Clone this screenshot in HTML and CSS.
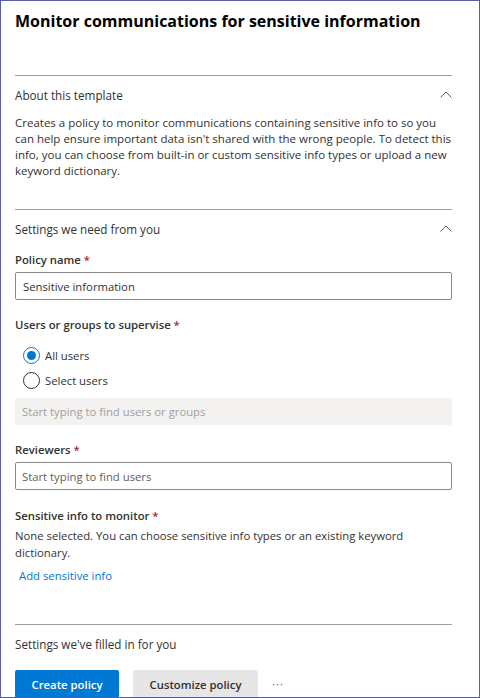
FILE: index.html
```html
<!DOCTYPE html>
<html lang="en">
<head>
<meta charset="utf-8">
<title>Monitor communications for sensitive information</title>
<link rel="stylesheet" href="styles.css">
</head>
<body>
<div class="frame">
  <div class="panel">
    <h1 class="title">Monitor communications for sensitive information</h1>

    <section class="section">
      <div class="section-head">
        <span>About this template</span>
        <svg class="chev" width="12" height="7" viewBox="0 0 12 7"><path d="M0.5 6.5 L6 1 L11.5 6.5" fill="none" stroke="#605e5c" stroke-width="1"/></svg>
      </div>
      <p class="about">Creates a policy to monitor communications containing sensitive info to so you can help ensure important data isn't shared with the wrong people. To detect this info, you can choose from built-in or custom sensitive info types or upload a new keyword dictionary.</p>
    </section>

    <section class="section">
      <div class="section-head">
        <span>Settings we need from you</span>
        <svg class="chev" width="12" height="7" viewBox="0 0 12 7"><path d="M0.5 6.5 L6 1 L11.5 6.5" fill="none" stroke="#605e5c" stroke-width="1"/></svg>
      </div>

      <div class="field">
        <label class="label">Policy name <span class="req">*</span></label>
        <div class="input">Sensitive information</div>
      </div>

      <div class="field">
        <label class="label">Users or groups to supervise <span class="req">*</span></label>
        <div class="radios">
          <div class="radio checked"><span class="dot"></span>All users</div>
          <div class="radio"><span class="dot"></span>Select users</div>
        </div>
        <div class="input disabled">Start typing to find users or groups</div>
      </div>

      <div class="field">
        <label class="label">Reviewers <span class="req">*</span></label>
        <div class="input placeholder">Start typing to find users</div>
      </div>

      <div class="field">
        <label class="label">Sensitive info to monitor <span class="req">*</span></label>
        <p class="note">None selected. You can choose sensitive info types or an existing keyword dictionary.</p>
        <a class="link" href="#">Add sensitive info</a>
      </div>
    </section>

    <section class="section last">
      <div class="section-head">
        <span>Settings we've filled in for you</span>
      </div>
      <div class="actions">
        <button class="btn primary">Create policy</button>
        <button class="btn secondary">Customize policy</button>
        <span class="more">···</span>
      </div>
    </section>
  </div>
</div>
</body>
</html>
```

FILE: styles.css
```css
* { box-sizing: border-box; }
html, body { margin: 0; padding: 0; background: #fff; }
body {
  font-family: "Open Sans", "Noto Sans", sans-serif;
  color: #323130;
  font-size: 11.3px;
}
.frame {
  width: 480px;
  height: 698px;
  border: 1px solid #5b5ea6;
  overflow: hidden;
  background: #fff;
}
.panel {
  width: 451px;
  padding-left: 14px;
}
.title {
  margin: 0;
  padding-top: 6px;
  height: 74px;
  font-size: 16px;
  line-height: 28px;
  font-weight: 700;
  color: #000;
  white-space: nowrap;
}
.section {
  border-top: 1px solid #a19f9d;
}
.section-head {
  height: 39px;
  padding-bottom: 2px;
  display: flex;
  align-items: center;
  justify-content: space-between;
  font-size: 11.7px;
}
.chev { display: block; }
.about {
  margin: 0 0 30px;
  font-size: 11.5px;
  line-height: 16px;
}
.field { margin-top: 1px; }
.label {
  display: block;
  font-weight: 600;
  line-height: 20px;
  color: #323130;
  padding-bottom: 2px;
}
.req { color: #a4262c; }
.input {
  height: 28px;
  border: 1px solid #8a8886;
  border-radius: 2px;
  padding: 0 7px;
  display: flex;
  align-items: center;
  color: #323130;
  margin-bottom: 15px;
}
.input.placeholder { color: #605e5c; padding-left: 6px; margin-bottom: 16px; }
.input.disabled {
  border-color: #f3f2f1;
  background: #f3f2f1;
  color: #a19f9d;
  height: 27px;
  padding-left: 6px;
}
.radios {
  padding: 6px 0 5px 8px;
}
.radio {
  display: flex;
  align-items: center;
  height: 25px;
  gap: 5px;
}
.dot {
  width: 17px;
  height: 17px;
  border: 1px solid #323130;
  border-radius: 50%;
  display: flex;
  align-items: center;
  justify-content: center;
}
.radio.checked .dot { border-color: #0078d4; }
.radio.checked .dot::after {
  content: "";
  width: 9px;
  height: 9px;
  border-radius: 50%;
  background: #0078d4;
}
.note {
  margin: 0;
  line-height: 16.5px;
}
.link {
  display: block;
  margin: 7px 0 0 4px;
  line-height: 16px;
  color: #0078d4;
  text-decoration: none;
}
.section.last { margin-top: 40px; }
.actions {
  display: flex;
  align-items: flex-start;
  gap: 14px;
  padding-top: 6px;
}
.btn {
  font-family: inherit;
  font-size: 11.3px;
  font-weight: 600;
  height: 28px;
  border: none;
  border-radius: 2px;
  padding: 0;
  white-space: nowrap;
  cursor: pointer;
}
.btn.primary { background: #0078d4; color: #fff; width: 104px; }
.btn.secondary { background: #e6e6e6; color: #323130; width: 125px; }
.more {
  color: #605e5c;
  line-height: 28px;
  letter-spacing: 1px;
}
```
